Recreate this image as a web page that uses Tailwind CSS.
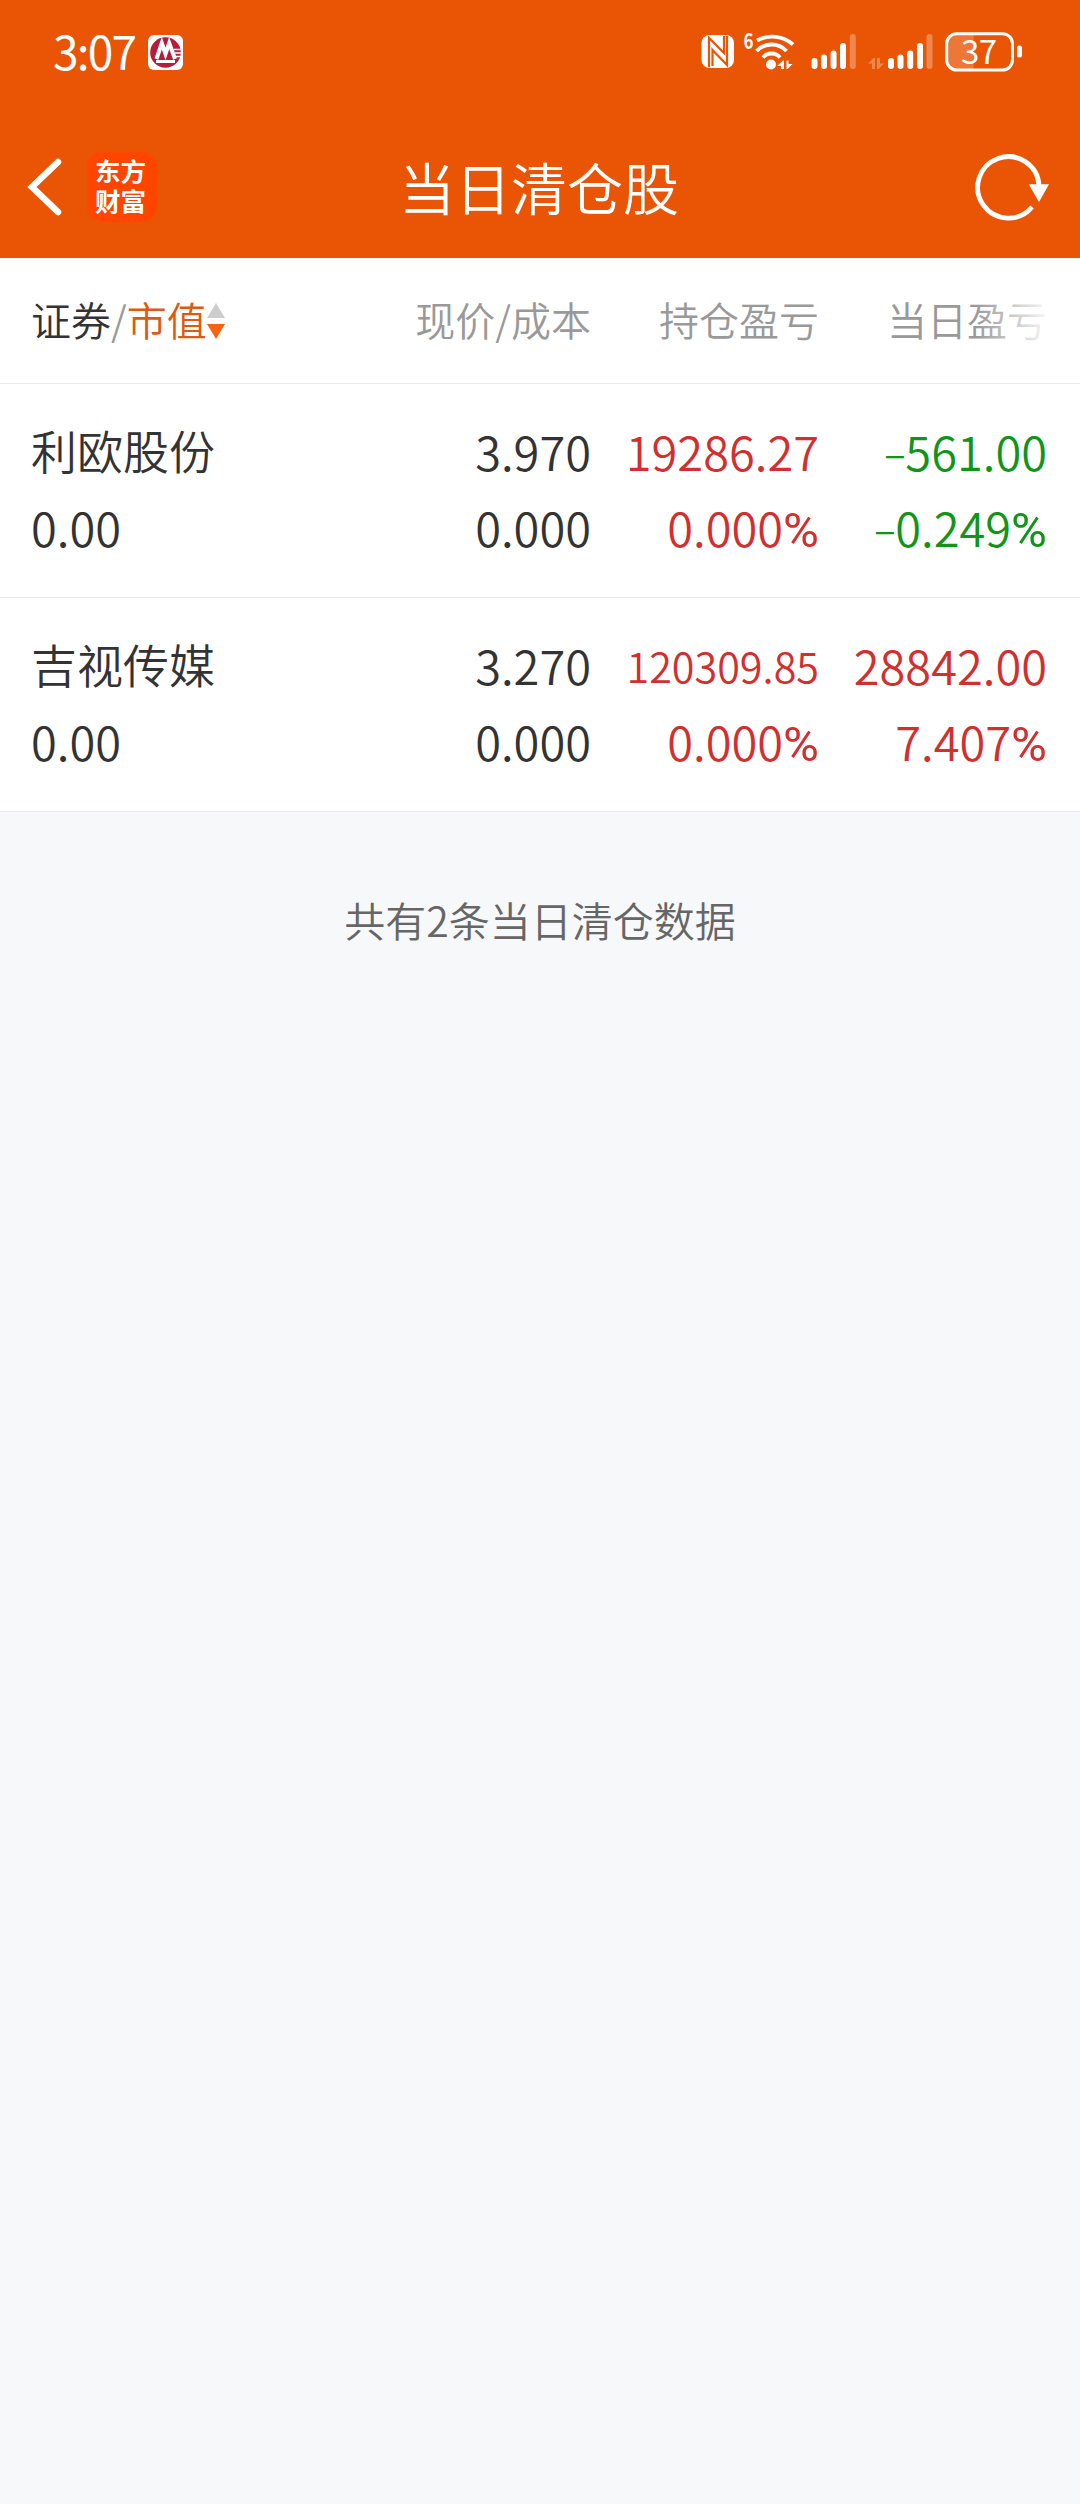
<!DOCTYPE html>
<html lang="zh">
<head>
    <meta charset="UTF-8">
    <meta name="viewport" content="width=device-width, initial-scale=1.0">
    <title>当日清仓股</title>
    <script src="https://cdn.jsdelivr.net/npm/@tailwindcss/browser@4"></script>
</head>
<body class="bg-[#f7f8fa] min-h-screen font-['Noto_Sans_CJK_SC',sans-serif] font-[350] text-[#333333]">
    <!-- Header -->
    <header class="bg-[#e95504] text-white h-[258px] flex flex-col">
        <!-- Status bar -->
        <div class="h-[104px] flex items-center justify-between pl-[53px] pr-[57px]">
            <div class="flex items-center">
                <span class="w-[95px] text-[46px] leading-[52px] font-normal tracking-[-1.8px] pb-1">3:07</span>
                <svg class="w-[35px] h-[35px]" viewBox="0 0 35 35">
                    <rect width="35" height="35" rx="6" fill="#fff"/>
                    <circle cx="17.5" cy="17.5" r="15.3" fill="#b81c3a"/>
                    <path d="M8.500 24L13.800 8L17.500 19L21.200 8L27 24" fill="none" stroke="#fff" stroke-width="4"/>
                    <path d="M8 26.500h19" fill="none" stroke="#fff" stroke-width="3"/>
                    <path d="M26 14.500h8M27 18h7M28 21.500h6" fill="none" stroke="#fff" stroke-width="1.500"/>
                </svg>
            </div>
            <div class="flex items-center h-10">
                <!-- NFC -->
                <svg class="w-[34px] h-10" viewBox="0 0 34 40">
                    <rect x="0.500" y="3" width="32.500" height="33" rx="8" fill="#fff"/>
                    <path d="M8 35V6L23 21V4M26 4V33L11.500 18V34" fill="none" stroke="#e95504" stroke-width="2.200"/>
                </svg>
                <!-- Wi-Fi 6 -->
                <svg class="w-[52px] h-10 ml-2 overflow-visible" viewBox="0 0 52 40">
                    <text x="0.500" y="17" font-size="21" font-weight="700" textLength="10" lengthAdjust="spacingAndGlyphs" fill="#fff">6</text>
                    <g fill="none" stroke="#fff" stroke-width="3.800">
                        <path d="M14 8.500A32 32 0 0 1 50 12.500"/>
                        <path d="M13.500 19A20.600 20.600 0 0 1 43.500 19"/>
                        <path d="M20 25.500A11 11 0 0 1 37 25.500"/>
                    </g>
                    <circle cx="28" cy="32.500" r="5" fill="#fff"/>
                    <path d="M34 34L40 28.500H41V37H38V34zM43.500 28.500H45.500V32H49.500L44.500 37H43.500z" fill="#fff"/>
                </svg>
                <!-- Signal -->
                <svg class="w-[46px] h-10 ml-4" viewBox="0 0 46 40">
                    <g stroke="#fff" stroke-width="6" stroke-linecap="round">
                        <path d="M3.500 29v5M13 25.500v8.500M22.600 21.500v12.500M32 14v20"/>
                        <path d="M41.800 5v29" stroke-opacity="0.3"/>
                    </g>
                </svg>
                <svg class="w-[66px] h-10 ml-[11px]" viewBox="0 0 66 40">
                    <path d="M0 31.500L5.500 26H7V37H4V31.500zM9 26H12V31.500H16L10.500 37H9z" fill="#fff" fill-opacity="0.3"/>
                    <g stroke="#fff" stroke-width="6" stroke-linecap="round">
                        <path d="M23 29v5M32.500 25.500v8.500M42.200 21.500v12.500M52 14v20"/>
                        <path d="M61.500 5v29" stroke-opacity="0.3"/>
                    </g>
                </svg>
                <!-- Battery -->
                <svg class="w-[78px] h-10 ml-[11px] overflow-visible" viewBox="0 0 78 40">
                    <path d="M28.700 2V38H13Q3 38 3 28V12Q3 2 13 2z" fill="#fff" fill-opacity="0.2"/>
                    <rect x="1.700" y="1.700" width="65.800" height="36.300" rx="10" fill="none" stroke="#fff" stroke-width="3"/>
                    <rect x="72" y="13.500" width="5" height="12" rx="2.500" fill="#fff"/>
                    <text x="34" y="32" font-size="33" font-weight="400" text-anchor="middle" textLength="36" fill="#fff">37</text>
                </svg>
            </div>
        </div>
        <!-- Title bar -->
        <div class="flex-1 grid grid-cols-[1fr_auto_1fr] items-center pt-3 pl-[26px] pr-[30px]">
            <div class="flex items-center">
                <svg class="w-[36px] h-[60px]" viewBox="0 0 36 60" fill="none" stroke="#fff" stroke-width="6.500" stroke-linecap="round">
                    <path d="M32 5L6 30L32 55"/>
                </svg>
                <div class="w-[70px] h-[70px] ml-[25px] pr-[3px] pb-1 rounded-[15px] bg-[#ff4500] flex flex-col items-center justify-center text-[25.5px] leading-[30px] font-bold">
                    <span>东方</span>
                    <span>财富</span>
                </div>
            </div>
            <h1 class="text-[56px] leading-[72px] pb-[3px] pl-[2px]">当日清仓股</h1>
            <svg class="w-[76px] h-[68px] justify-self-end" viewBox="0 0 76 68">
                <path d="M58 54A30.700 30.700 0 1 1 65 32" fill="none" stroke="#fff" stroke-width="4.800"/>
                <path d="M54.700 31.300H75L65 49z" fill="#fff"/>
            </svg>
        </div>
    </header>

    <!-- Holdings -->
    <main>
        <section class="bg-white">
            <div class="relative h-[126px] border-b border-[#ebebeb] grid grid-cols-[260px_299px_228px_228px] items-center pl-8 pb-1 text-[40px] leading-[60px] text-[#999999] text-right">
                <div class="flex items-center text-left whitespace-nowrap -ml-px">
                    <span class="text-[#333333]">证券</span>
                    <span>/</span>
                    <span class="text-[#dc5a14]">市值</span>
                    <svg class="w-[18px] h-[36px] mt-1" viewBox="0 0 18 36">
                        <path d="M0 15L9 0L18 15z" fill="#cccccc"/>
                        <path d="M0 21H18L9 36z" fill="#f76310"/>
                    </svg>
                </div>
                <div>现价/成本</div>
                <div>持仓盈亏</div>
                <div>当日盈亏</div>
                <div class="absolute right-0 top-0 h-full w-[105px] bg-linear-to-r from-white/0 to-white to-75%"></div>
            </div>

            <div class="h-[214px] border-b border-[#ebebeb] grid grid-cols-[259px_300px_228px_228px] pl-8 pt-[29px] text-[47px] leading-[76px] text-right">
                <div class="text-left -ml-px">
                    <p class="h-[76px] text-[46px] leading-[73px]">利欧股份</p>
                    <p>0.00</p>
                </div>
                <div>
                    <p>3.970</p>
                    <p>0.000</p>
                </div>
                <div class="text-[#d0302f]">
                    <p>19286.27</p>
                    <p>0.000<span class="font-['Roboto'] font-normal text-[49px] leading-none">%</span></p>
                </div>
                <div class="text-[#12941a]">
                    <p><span class="text-[38px] leading-none">−</span>561.00</p>
                    <p><span class="text-[38px] leading-none">−</span>0.249<span class="font-['Roboto'] font-normal text-[49px] leading-none">%</span></p>
                </div>
            </div>

            <div class="h-[214px] border-b border-[#ebebeb] grid grid-cols-[259px_300px_228px_228px] pl-8 pt-[29px] text-[47px] leading-[76px] text-right">
                <div class="text-left -ml-px">
                    <p class="h-[76px] text-[46px] leading-[73px]">吉视传媒</p>
                    <p>0.00</p>
                </div>
                <div>
                    <p>3.270</p>
                    <p>0.000</p>
                </div>
                <div class="text-[#d0302f]">
                    <p class="text-[41.3px]">120309.85</p>
                    <p>0.000<span class="font-['Roboto'] font-normal text-[49px] leading-none">%</span></p>
                </div>
                <div class="text-[#d0302f]">
                    <p>28842.00</p>
                    <p>7.407<span class="font-['Roboto'] font-normal text-[49px] leading-none">%</span></p>
                </div>
            </div>
        </section>

        <p class="mt-[77px] text-center text-[41px] leading-[60px] text-[#666666]">共有2条当日清仓数据</p>
    </main>
</body>
</html>
